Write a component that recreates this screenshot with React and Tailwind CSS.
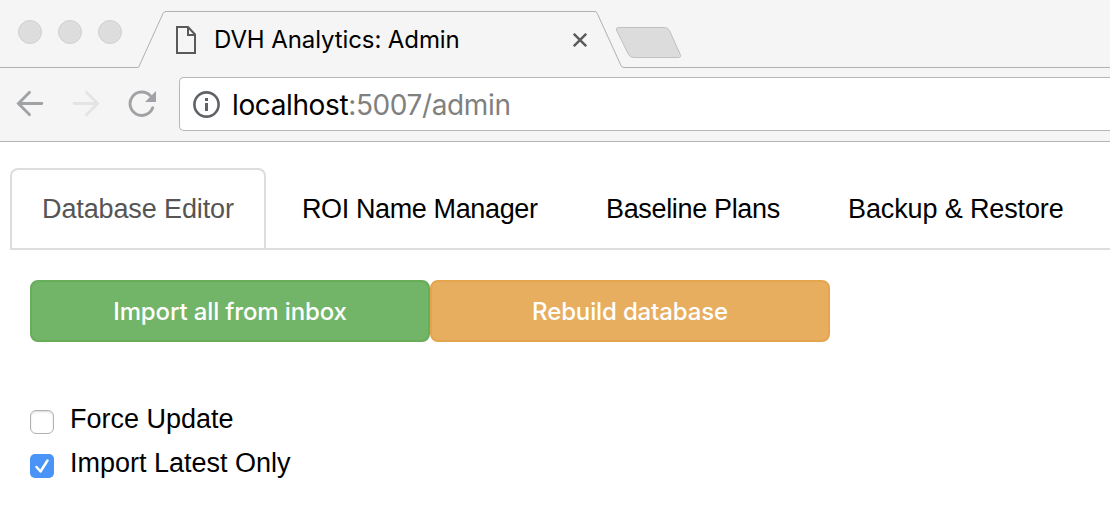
function WindowTabStrip() {
  return (
    <div className="flex h-[68px] w-full bg-[#f5f5f5]">
      <div className="flex w-[138px] shrink-0 gap-4 border-b border-[#b0b2b4] pt-5 pl-[18px]">
        <span className="h-6 w-6 rounded-full border border-[#d0d0d0] bg-[#dddddd]" />
        <span className="h-6 w-6 rounded-full border border-[#d0d0d0] bg-[#dddddd]" />
        <span className="h-6 w-6 rounded-full border border-[#d0d0d0] bg-[#dddddd]" />
      </div>
      <svg className="h-[68px] w-[28px] shrink-0" viewBox="0 0 28 68" fill="none" stroke="#aeb0b2">
        <path d="M0 67.5 Q.8 67.3 1.2 66 L25 13.5 Q26 11.5 28 11.5" />
      </svg>
      <div className="mt-[11px] flex h-[57px] w-[429px] shrink-0 border-t border-[#b0b2b4]">
        <svg className="mt-[14px] ml-[10px] h-[28px] w-[20px] shrink-0" viewBox="0 0 20 28" fill="none" stroke="#5a5a5a" strokeWidth="2">
          <path d="M1 1H12L19 8.5V27H1Z" />
          <path d="M12 1V9H19" />
        </svg>
        <span className='mt-[10px] ml-[18px] w-[340px] text-[24px] leading-9 whitespace-nowrap text-black font-["Inter",sans-serif] tracking-[-0.1px]'>
          DVH Analytics: Admin
        </span>
        <svg className="mt-[21px] ml-[19px] h-[14px] w-[14px] shrink-0" viewBox="0 0 14 14" stroke="#5a5a5a" strokeWidth="2.4">
          <path d="M.8 .8L13.2 13.2M13.2 .8L.8 13.2" />
        </svg>
      </div>
      <svg className="h-[68px] w-[88px] shrink-0" viewBox="0 0 88 68" fill="none" stroke="#aeb0b2">
        <path d="M0 11.5 Q1.5 11.5 2.3 13.5 L26 65.5 Q27 67.5 29 67.5 H88" />
        <path d="M24 27.5H69.5Q73 27.5 74.5 30.5L85.3 54.5Q86.5 57.5 83.5 57.5H39Q35 57.5 33.5 54.5L21.5 30Q20.5 27.5 24 27.5Z" fill="#dcdcdc" stroke="#c0c0c0" />
      </svg>
      <div className="flex-1 border-b border-[#b0b2b4]" />
    </div>
  )
}

function Toolbar() {
  return (
    <div className="flex h-[74px] w-full border-b border-[#b4b4b4] bg-[#f5f5f5]">
      <svg className="mt-[22px] ml-[16px] h-[28px] w-[28px] shrink-0" viewBox="0 0 28 28" fill="none" stroke="#a0a2a6" strokeWidth="2.9" strokeLinecap="round">
        <path d="M25.8 13.5H2.5M13.4 2.4L2.4 13.5L13.4 24.6" />
      </svg>
      <svg className="mt-[22px] ml-[28px] h-[28px] w-[28px] shrink-0" viewBox="0 0 28 28" fill="none" stroke="#e3e4e5" strokeWidth="2.9" strokeLinecap="round">
        <path d="M2.2 13.5H25.5M14.6 2.4L25.6 13.5L14.6 24.6" />
      </svg>
      <svg className="mt-[22px] ml-[28px] h-[28px] w-[29px] shrink-0" viewBox="0 0 29 28" fill="none">
        <path d="M24.7 17.8A11.7 11.7 0 1 1 22.2 5.6" stroke="#a0a2a6" strokeWidth="2.9" strokeLinecap="round" />
        <path d="M28 1V12H17Z" fill="#a0a2a6" />
      </svg>
      <div className="mt-[9px] ml-[22px] flex h-[54px] flex-1 items-start rounded-l-[5px] border border-r-0 border-[#b6b6b6] bg-white">
        <svg className="mt-[13px] ml-[13px] h-[27px] w-[27px] shrink-0" viewBox="0 0 27 27" fill="none">
          <circle cx="13.5" cy="13.5" r="12.1" stroke="#5f6267" strokeWidth="2.6" />
          <path d="M12 7H15V10H12ZM12 12H15V20H12Z" fill="#5f6267" />
        </svg>
        <span className='mt-[9px] ml-[12px] text-[28px] leading-9 whitespace-nowrap text-[#808080] font-["Inter",sans-serif] tracking-[-0.38px]'>
          <span className="text-black">localhost</span>:5007/admin
        </span>
      </div>
    </div>
  )
}

function Tabs() {
  return (
    <nav className="mt-[26px] ml-[10px] flex h-[82px] border-b-2 border-[#dddddd] text-[27px] leading-[78px] whitespace-nowrap text-black">
      <a className="w-[256px] shrink-0 rounded-t-[8px] border-2 border-b-0 border-[#dddddd] pl-[30px] tracking-[-0.12px] text-[#555555]">Database Editor</a>
      <a className="w-[304px] shrink-0 pt-[2px] pl-[36px] tracking-[-0.38px]">ROI Name Manager</a>
      <a className="w-[242px] shrink-0 pt-[2px] pl-[36px] tracking-[-0.34px]">Baseline Plans</a>
      <a className="shrink-0 pt-[2px] pl-[36px] tracking-[-0.13px]">Backup &amp; Restore</a>
    </nav>
  )
}

export default function App() {
  return (
    <div className='h-[526px] w-full overflow-hidden bg-white font-["Liberation_Sans",Arial,sans-serif]'>
      <WindowTabStrip />
      <Toolbar />
      <Tabs />
      <div className='mt-[30px] ml-[30px] flex text-[24px] leading-[58px] font-medium tracking-[-0.14px] text-white font-["Inter",sans-serif]'>
        <button className="h-[62px] w-[400px] rounded-[8px] border-2 border-[#68ad59] bg-[#73b568] pt-[2px] leading-[56px]">Import all from inbox</button>
        <button className="h-[62px] w-[400px] rounded-[8px] border-2 border-[#e4a54e] bg-[#e7ae60] pt-[2px] leading-[56px]">Rebuild database</button>
      </div>
      <div className="mt-[55px] ml-[30px] flex flex-col text-[27px] leading-[44px] text-black">
        <label className="flex h-[44px]">
          <span className="mt-[13px] mr-[16px] h-6 w-6 rounded-[6px] border border-[#b2b2b2] bg-white shadow-[inset_0_1px_2px_rgba(0,0,0,0.15)]" />
          Force Update
        </label>
        <label className="flex h-[44px]">
          <svg className="mt-[13px] mr-[16px] h-6 w-6" viewBox="0 0 24 24" fill="none">
            <rect width="24" height="24" rx="5" fill="#4b94f7" />
            <path d="M6.5 13L10.5 17.5L17.5 6.5" stroke="white" strokeWidth="2.5" strokeLinecap="round" strokeLinejoin="round" />
          </svg>
          Import Latest Only
        </label>
      </div>
    </div>
  )
}
